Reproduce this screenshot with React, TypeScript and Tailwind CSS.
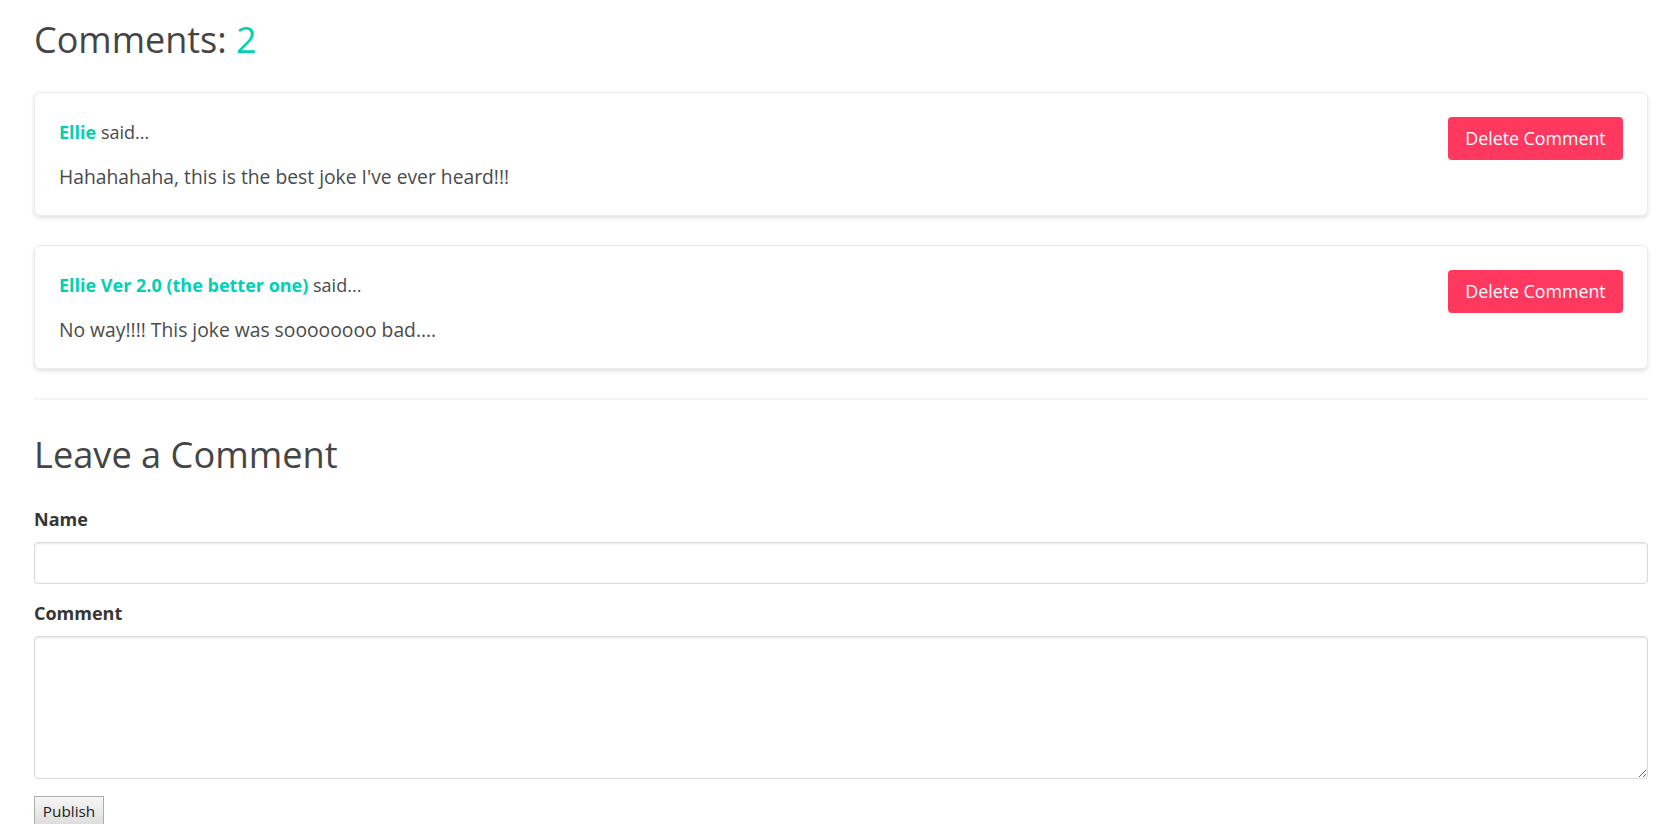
import React from "react";

const comments = [
  { name: "Ellie", text: "Hahahahaha, this is the best joke I've ever heard!!!" },
  { name: "Ellie Ver 2.0 (the better one)", text: "No way!!!! This joke was soooooooo bad...." },
];

export default function App() {
  return (
    <div className="min-h-[824px] bg-white text-[#4a4a4a] [font-family:'Open_Sans',sans-serif]">
      <div className="ml-[34px] w-[1614px] pt-[20px]">
        <h1 className="text-[36px] leading-[40px] font-normal text-[#454545]">
          Comments: <span className="text-[#00d1b2]">2</span>
        </h1>

        <div className="mt-[32px] flex flex-col gap-[29px]">
          {comments.map((c) => (
            <div
              key={c.name}
              className="flex items-start justify-between rounded-[6px] border border-[#ececec] bg-white p-6 shadow-[0_2px_4px_rgba(10,10,10,0.12)]"
            >
              <div className="mt-[2px]">
                <p className="text-[18px] leading-[26.4px]">
                  <span className="font-bold text-[#00d1b2]">{c.name}</span> said...
                </p>
                <p className="mt-[19px] text-[19.3px] leading-[26.4px]">{c.text}</p>
              </div>
              <button className="flex h-[43px] w-[175px] items-center justify-center rounded-[4px] bg-[#ff3860] text-[17.8px] text-white">
                Delete Comment
              </button>
            </div>
          ))}
        </div>

        <hr className="mt-[29px] h-[2px] border-0 bg-[#f5f5f5]" />

        <h2 className="mt-[34px] text-[36.2px] leading-[40px] font-normal text-[#454545]">
          Leave a Comment
        </h2>

        <label className="mt-[32px] block text-[18px] leading-[26.4px] font-bold text-[#363636]">
          Name
        </label>
        <input
          type="text"
          className="mt-[10px] block h-[42px] w-full rounded-[4px] border border-[#dbdbdb] px-3 shadow-[inset_0_1px_2px_rgba(10,10,10,0.1)] outline-none"
        />

        <label className="mt-[16px] block text-[18px] leading-[26.4px] font-bold text-[#363636]">
          Comment
        </label>
        <textarea className="mt-[10px] block h-[143px] w-full rounded-[4px] border border-[#dbdbdb] px-3 py-2 shadow-[inset_0_1px_2px_rgba(10,10,10,0.1)] outline-none" />

        <button className="mt-[17px] block h-[30px] w-[70px] border border-[#adadad] bg-gradient-to-b from-[#f6f6f6] to-[#dddddd] text-[15.3px] leading-[20px] text-[#222]">
          Publish
        </button>
      </div>
    </div>
  );
}
